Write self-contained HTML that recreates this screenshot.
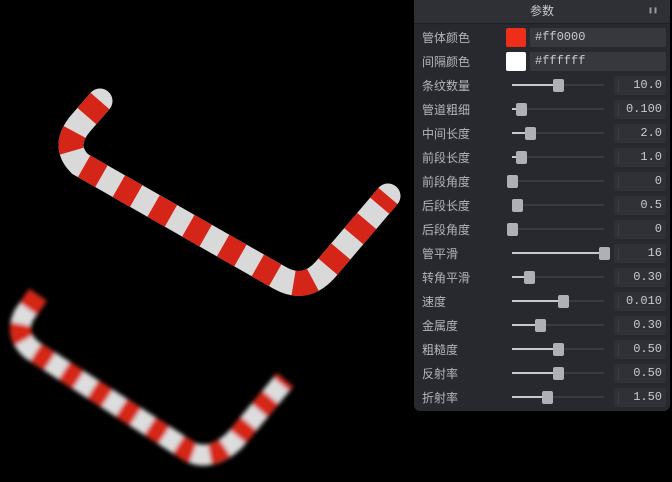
<!DOCTYPE html>
<html><head><meta charset="utf-8"><style>
body{margin:0;width:672px;height:482px;background:#000;overflow:hidden;font-family:"Liberation Sans","Noto Sans CJK SC",sans-serif;position:relative}
.p{position:absolute;left:414px;top:0;width:256px;height:411px;background:#28292e;border-radius:0 0 6px 6px}
.h{height:23px;background:#2f3035;color:#c9cacf;font-size:12px;text-align:center;line-height:22px;border-bottom:1px solid #1e1f23}
.h span{position:absolute;right:12px;top:0;font-size:6px;color:#999}
.r{position:absolute;left:0;width:256px;height:24px}
.l{position:absolute;left:8px;top:4px;font-size:12px;color:#b4b5ba}
.sw{position:absolute;left:92px;top:3px;width:20px;height:19px;border-radius:2px}
.tf{position:absolute;left:116px;top:3px;width:136px;height:19px;background:#37383d;border-radius:2px;color:#c9cacf;font:12px "Liberation Mono",monospace;line-height:19px;text-indent:5px}
.tr{position:absolute;left:98px;top:11px;width:92px;height:2px;background:#3a3b40}
.fl{position:absolute;left:98px;top:11px;height:2px;background:#c8c9ce}
.k{position:absolute;top:6px;width:11px;height:13px;background:#aeb0b8;border-radius:2px;margin-left:-5px}
.n{position:absolute;left:200px;top:3px;width:52px;height:19px;background:#303136;border-radius:2px;color:#c9cacf;font:12px "Liberation Mono",monospace;line-height:19px;text-align:right;box-sizing:border-box;padding-right:4px}
.n:before{content:"";position:absolute;left:4px;top:3px;width:1px;height:13px;background:#3c3d42}
</style></head><body>
<svg width="672" height="482" style="position:absolute;left:0;top:0">
<defs><filter id="b"><feGaussianBlur stdDeviation="2.2"/></filter></defs>
<path d="M100,101 L80,124 Q62,146 80,164 L280,278 Q305,292 325,270 L388,196" fill="none" stroke="#d9d9d9" stroke-width="25" stroke-linecap="round"/>
<path d="M100,101 L80,124 Q62,146 80,164 L280,278 Q305,292 325,270 L388,196" fill="none" stroke="#d52518" stroke-width="25" stroke-dasharray="20 20"/>
<g filter="url(#b)">
<path d="M38,295 L24,315 Q14,335 32,350 L190,452 Q212,462 235,440 L285,380" fill="none" stroke="#ddd" stroke-width="21"/>
<path d="M38,295 L24,315 Q14,335 32,350 L190,452 Q212,462 235,440 L285,380" fill="none" stroke="#d52518" stroke-width="21" stroke-dasharray="17 17"/>
</g>
</svg>
<div class="p">
<div class="h">参数<span>❚❚</span></div>
<div class="r" style="top:25px"><div class="l">管体颜色</div><div class="sw" style="background:#ee2e1a"></div><div class="tf">#ff0000</div></div>
<div class="r" style="top:49px"><div class="l">间隔颜色</div><div class="sw" style="background:#fff"></div><div class="tf">#ffffff</div></div>
<div class="r" style="top:73px"><div class="l">条纹数量</div><div class="tr"></div><div class="fl" style="width:46px"></div><div class="k" style="left:144px"></div><div class="n">10.0</div></div>
<div class="r" style="top:97px"><div class="l">管道粗细</div><div class="tr"></div><div class="fl" style="width:9px"></div><div class="k" style="left:107px"></div><div class="n">0.100</div></div>
<div class="r" style="top:121px"><div class="l">中间长度</div><div class="tr"></div><div class="fl" style="width:18px"></div><div class="k" style="left:116px"></div><div class="n">2.0</div></div>
<div class="r" style="top:145px"><div class="l">前段长度</div><div class="tr"></div><div class="fl" style="width:9px"></div><div class="k" style="left:107px"></div><div class="n">1.0</div></div>
<div class="r" style="top:169px"><div class="l">前段角度</div><div class="tr"></div><div class="k" style="left:98px"></div><div class="n">0</div></div>
<div class="r" style="top:193px"><div class="l">后段长度</div><div class="tr"></div><div class="fl" style="width:5px"></div><div class="k" style="left:103px"></div><div class="n">0.5</div></div>
<div class="r" style="top:217px"><div class="l">后段角度</div><div class="tr"></div><div class="k" style="left:98px"></div><div class="n">0</div></div>
<div class="r" style="top:241px"><div class="l">管平滑</div><div class="tr"></div><div class="fl" style="width:92px"></div><div class="k" style="left:190px"></div><div class="n">16</div></div>
<div class="r" style="top:265px"><div class="l">转角平滑</div><div class="tr"></div><div class="fl" style="width:17px"></div><div class="k" style="left:115px"></div><div class="n">0.30</div></div>
<div class="r" style="top:289px"><div class="l">速度</div><div class="tr"></div><div class="fl" style="width:51px"></div><div class="k" style="left:149px"></div><div class="n">0.010</div></div>
<div class="r" style="top:313px"><div class="l">金属度</div><div class="tr"></div><div class="fl" style="width:28px"></div><div class="k" style="left:126px"></div><div class="n">0.30</div></div>
<div class="r" style="top:337px"><div class="l">粗糙度</div><div class="tr"></div><div class="fl" style="width:46px"></div><div class="k" style="left:144px"></div><div class="n">0.50</div></div>
<div class="r" style="top:361px"><div class="l">反射率</div><div class="tr"></div><div class="fl" style="width:46px"></div><div class="k" style="left:144px"></div><div class="n">0.50</div></div>
<div class="r" style="top:385px"><div class="l">折射率</div><div class="tr"></div><div class="fl" style="width:35px"></div><div class="k" style="left:133px"></div><div class="n">1.50</div></div>
</div>
</body></html>
